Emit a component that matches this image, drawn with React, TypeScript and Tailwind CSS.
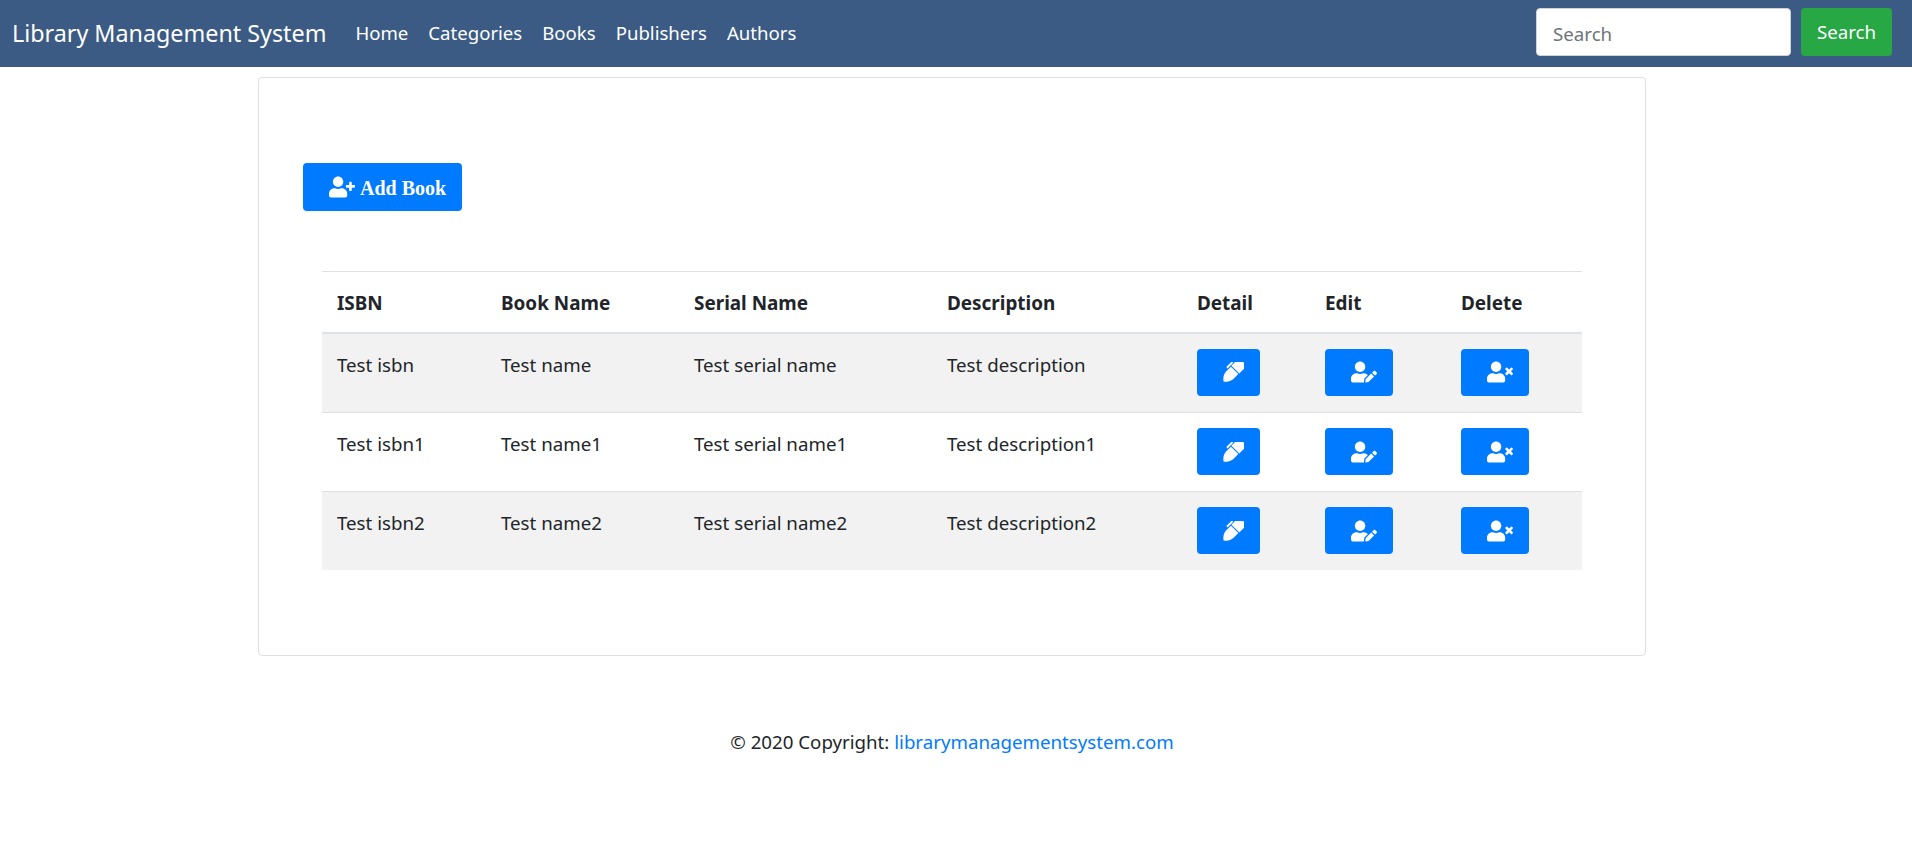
import { FaUserPlus, FaUserEdit, FaUserTimes } from "react-icons/fa";

const rows = [
  { isbn: "Test isbn", name: "Test name", serial: "Test serial name", description: "Test description" },
  { isbn: "Test isbn1", name: "Test name1", serial: "Test serial name1", description: "Test description1" },
  { isbn: "Test isbn2", name: "Test name2", serial: "Test serial name2", description: "Test description2" },
];

// pen with a clip, drawn by hand: none of the icon sets has this exact shape
const PenIcon = () => (
  <svg viewBox="0 0 21 20" className="h-[20px] w-[21px]" fill="currentColor">
    <g transform="translate(0.6 19.4) rotate(-45)">
      <path d="M0 0 C2 -3 5 -5 9 -5.2 L15.6 -5.2 L15.6 5.2 L9 5.2 C5 5 2 3 0 0 Z" />
      <path d="M16.6 -5.6 L23 -5.6 C26 -5.6 27.6 -3 27.6 0 C27.6 3 26 5.6 23 5.6 L16.6 5.6 Z" />
      <path d="M12 -8.2 L20 -8.2 L20 -6.4 L12 -6.4 Z" />
    </g>
  </svg>
);

const App = () => {
  return (
    <div className="min-h-[841px] bg-white text-[18.7px] text-[#212529] font-['Noto_Sans',sans-serif]">
      <nav className="flex h-[67px] items-center bg-[#3b5b84] pl-3 pr-5 text-white">
        <a className="mr-[29px] pb-[1px] text-[23.3px]">Library Management System</a>
        <ul className="flex gap-5 pb-[1px] text-[18.6px]">
          <li>Home</li>
          <li>Categories</li>
          <li>Books</li>
          <li>Publishers</li>
          <li>Authors</li>
        </ul>
        <div className="ml-auto flex items-center gap-2.5 pb-[3px]">
          <input
            placeholder="Search"
            className="h-[48px] w-[255px] rounded border border-[#ced4da] bg-white px-4 pt-[2px] text-[18.7px] text-[#495057] placeholder:text-[#6c757d]"
          />
          <button className="h-[48px] w-[91px] rounded bg-[#28a745] pt-[1px] text-[18.7px] text-white">Search</button>
        </div>
      </nav>

      <div className="ml-[258px] mt-[10px] h-[579px] w-[1388px] rounded border border-[#dfdfdf] px-11 pt-[85px]">
        <button className="flex h-[48px] w-[159px] items-center gap-[5px] rounded bg-[#007bff] pl-[26px] font-['Liberation_Serif',serif] text-[20px] font-bold text-white">
          <FaUserPlus className="text-[26px]" />
          <span className="pt-[2px]">Add Book</span>
        </button>

        <div className="mx-[19px] mt-[60px]">
          <table className="w-full border-collapse text-left">
            <thead>
              <tr className="h-[61px] border-t border-b-2 border-[#dee2e6] text-[18.9px]">
                <th className="w-[164px] pl-[15px] pt-[2px] font-bold">ISBN</th>
                <th className="w-[193px] pl-[15px] pt-[2px] font-bold">Book Name</th>
                <th className="w-[253px] pl-[15px] pt-[2px] font-bold">Serial Name</th>
                <th className="w-[250px] pl-[15px] pt-[2px] font-bold">Description</th>
                <th className="w-[128px] pl-[15px] pt-[2px] font-bold">Detail</th>
                <th className="w-[136px] pl-[15px] pt-[2px] font-bold">Edit</th>
                <th className="pl-[15px] pt-[2px] font-bold">Delete</th>
              </tr>
            </thead>
            <tbody>
              {rows.map((row, i) => (
                <tr
                  key={row.isbn}
                  className={`${i === 0 ? "h-[80px] border-b" : i === 1 ? "h-[79px] border-b" : "h-[78px] border-b-0"} border-[#dee2e6] ${i % 2 === 0 ? "bg-[#f2f2f2]" : ""}`}
                >
                  <td className="pl-[15px] pt-[17px] align-top">{row.isbn}</td>
                  <td className="pl-[15px] pt-[17px] align-top">{row.name}</td>
                  <td className="pl-[15px] pt-[17px] align-top">{row.serial}</td>
                  <td className="pl-[15px] pt-[17px] align-top">{row.description}</td>
                  <td className="pl-[15px] pt-[15px] align-top">
                    <button className="flex h-[47px] w-[63px] items-center justify-center rounded bg-[#007bff] pl-[10px] text-white">
                      <PenIcon />
                    </button>
                  </td>
                  <td className="pl-[15px] pt-[15px] align-top">
                    <button className="flex h-[47px] w-[68px] items-center justify-center rounded bg-[#007bff] pl-[10px] text-[26px] text-white">
                      <FaUserEdit />
                    </button>
                  </td>
                  <td className="pl-[15px] pt-[15px] align-top">
                    <button className="flex h-[47px] w-[68px] items-center justify-center rounded bg-[#007bff] pl-[10px] text-[26px] text-white">
                      <FaUserTimes />
                    </button>
                  </td>
                </tr>
              ))}
            </tbody>
          </table>
        </div>
      </div>

      <footer className="mt-[72px] pr-[8px] text-center">
        © 2020 Copyright: <a className="text-[#007bff]">librarymanagementsystem.com</a>
      </footer>
    </div>
  );
};

export default App;
